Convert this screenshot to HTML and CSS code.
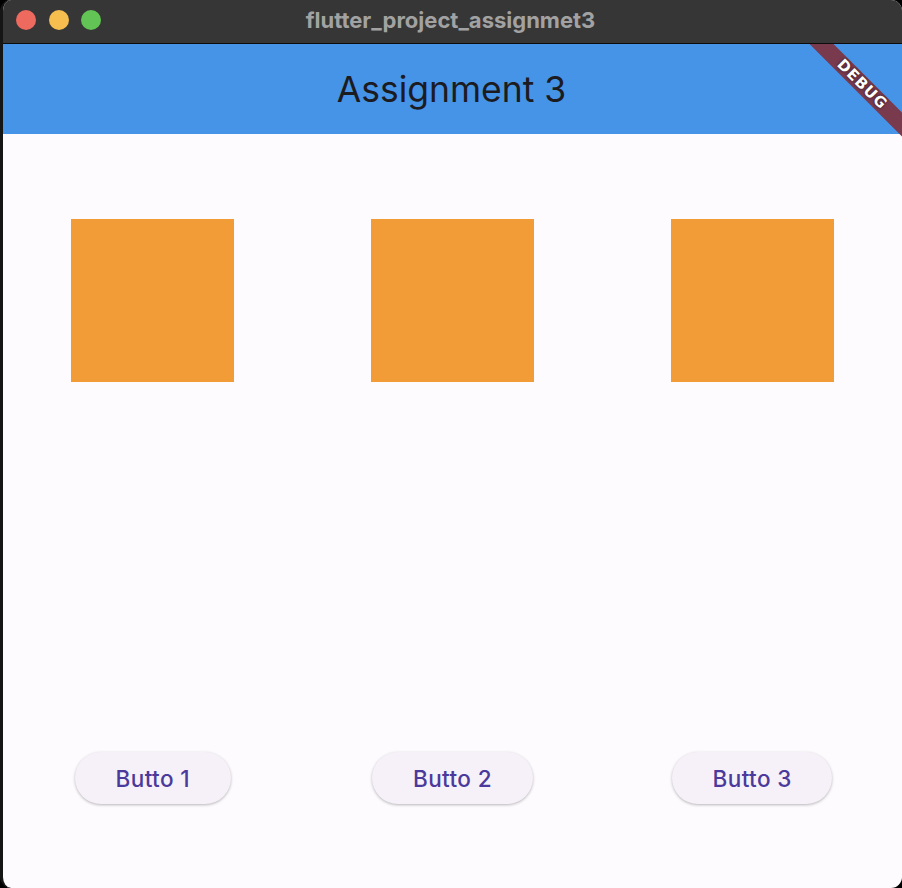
FILE: index.html
```html
<!DOCTYPE html>
<html>
<head>
<meta charset="utf-8">
<link rel="stylesheet" href="styles.css">
</head>
<body>
<div class="window">
  <div class="titlebar">
    <div class="lights">
      <span class="light red"></span>
      <span class="light yellow"></span>
      <span class="light green"></span>
    </div>
    <div class="wintitle">flutter_project_assignmet3</div>
  </div>
  <div class="app">
    <div class="appbar">Assignment 3</div>
    <div class="content">
      <div class="row squares">
        <div class="cell"><div class="square"></div></div>
        <div class="cell"><div class="square"></div></div>
        <div class="cell"><div class="square"></div></div>
      </div>
      <div class="row buttons">
        <div class="cell"><button class="btn">Butto 1</button></div>
        <div class="cell"><button class="btn">Butto 2</button></div>
        <div class="cell"><button class="btn">Butto 3</button></div>
      </div>
    </div>
    <div class="banner">DEBUG</div>
  </div>
</div>
</body>
</html>
```
FILE: styles.css
```css
html, body {
  margin: 0;
  padding: 0;
  background: #000;
}
body {
  width: 902px;
  height: 888px;
  overflow: hidden;
}
.window {
  width: 899px;
  height: 888px;
  border-left: 3px solid #151515;
  border-radius: 11px;
  overflow: hidden;
  background: #fdfbfe;
  display: flex;
  flex-direction: column;
}
.titlebar {
  height: 43px;
  border-bottom: 1px solid #0c0c0c;
  background: #363636;
  position: relative;
  display: flex;
  align-items: center;
  justify-content: center;
}
.lights {
  position: absolute;
  left: 13px;
  top: 10px;
  display: flex;
  gap: 12.5px;
}
.light {
  width: 20px;
  height: 20px;
  border-radius: 50%;
  display: block;
}
.red { background: #ee6a5f; }
.yellow { background: #f5be4f; }
.green { background: #61c454; }
.wintitle {
  font-family: "Inter", "Liberation Sans", sans-serif;
  font-weight: 700;
  font-size: 22px;
  color: #a2a2a2;
  margin-right: 4px;
  margin-top: -3px;
}
.app {
  flex: 1;
  position: relative;
  overflow: hidden;
  display: flex;
  flex-direction: column;
}
.appbar {
  height: 90px;
  background: #4694e8;
  display: flex;
  align-items: center;
  justify-content: center;
  font-family: "Inter", "Liberation Sans", sans-serif;
  font-size: 35.5px;
  color: #1c1b1f;
  padding-right: 2px;
}
.content {
  flex: 1;
  display: flex;
  flex-direction: column;
  padding-top: 85px;
}
.row {
  display: flex;
  justify-content: space-around;
}
.cell {
  flex: 1;
  display: flex;
  justify-content: center;
}
.square {
  width: 163px;
  height: 163px;
  background: #f29c37;
}
.buttons {
  margin-top: 370px;
}
.btn {
  height: 52px;
  padding: 0 40.5px;
  border: none;
  border-radius: 26px;
  background: #f6f1f8;
  box-shadow: 0 1px 3px rgba(0, 0, 0, 0.28);
  font-family: "Inter", "Liberation Sans", sans-serif;
  font-size: 22.5px;
  font-weight: 500;
  letter-spacing: 0.4px;
  color: #4b3a9b;
}
.banner {
  position: absolute;
  left: 759px;
  top: 32px;
  width: 200px;
  height: 17px;
  line-height: 17px;
  transform: rotate(45deg);
  background: #7a3a4e;
  color: #fff;
  font-family: "DejaVu Sans", "Liberation Sans", sans-serif;
  font-weight: 900;
  font-size: 15px;
  letter-spacing: 1px;
  text-align: center;
  text-shadow: 0 0 3px rgba(0, 0, 0, 0.7);
}
```
